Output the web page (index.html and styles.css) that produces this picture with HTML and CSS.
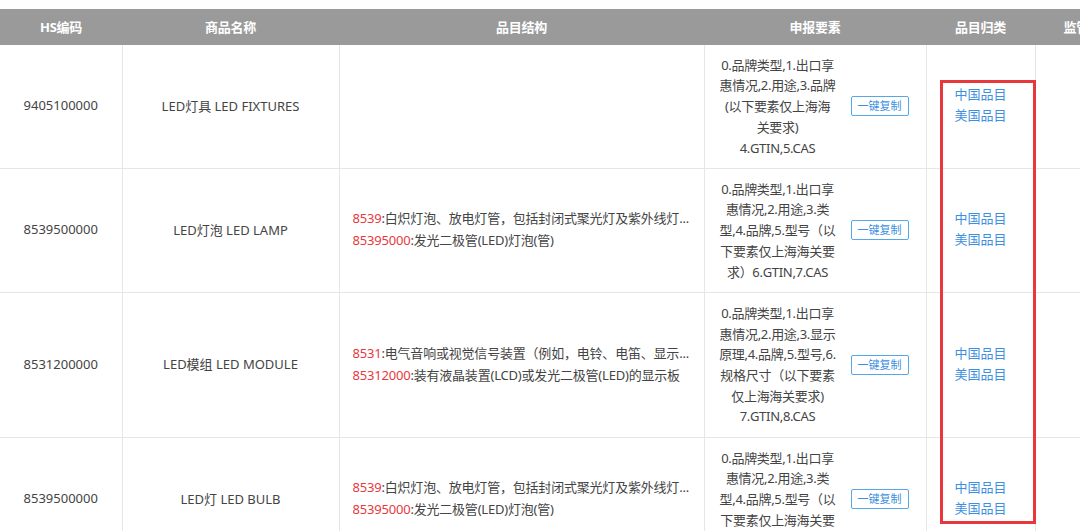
FILE: index.html
```html
<!DOCTYPE html>
<html lang="zh">
<head>
<meta charset="utf-8">
<title>HS编码</title>
<link rel="stylesheet" href="styles.css">
</head>
<body>
<div class="page">
  <table class="grid">
    <colgroup>
      <col class="c1"><col class="c2"><col class="c3"><col class="c4"><col class="c5"><col class="c6">
    </colgroup>
    <thead>
      <tr>
        <th>HS编码</th>
        <th>商品名称</th>
        <th>品目结构</th>
        <th>申报要素</th>
        <th>品目归类</th>
        <th>监管条件</th>
      </tr>
    </thead>
    <tbody>
      <tr class="r1">
        <td class="code">9405100000</td>
        <td class="name">LED灯具 LED FIXTURES</td>
        <td class="struct"></td>
        <td class="elem">
          <div class="elem-wrap">
            <div class="elem-text">0.品牌类型,1.出口享<br>惠情况,2.用途,3.品牌<br>(以下要素仅上海海<br>关要求)<br>4.GTIN,5.CAS</div>
            <span class="copy">一键复制</span>
          </div>
        </td>
        <td class="cat"><a>中国品目</a><a>美国品目</a></td>
        <td></td>
      </tr>
      <tr class="r2">
        <td class="code">8539500000</td>
        <td class="name">LED灯泡 LED LAMP</td>
        <td class="struct">
          <p><span class="num">8539</span>:白炽灯泡、放电灯管，包括封闭式聚光灯及紫外线灯...</p>
          <p><span class="num">85395000</span>:发光二极管(LED)灯泡(管)</p>
        </td>
        <td class="elem">
          <div class="elem-wrap">
            <div class="elem-text">0.品牌类型,1.出口享<br>惠情况,2.用途,3.类<br>型,4.品牌,5.型号（以<br>下要素仅上海海关要<br>求）6.GTIN,7.CAS</div>
            <span class="copy">一键复制</span>
          </div>
        </td>
        <td class="cat"><a>中国品目</a><a>美国品目</a></td>
        <td></td>
      </tr>
      <tr class="r3">
        <td class="code">8531200000</td>
        <td class="name">LED模组 LED MODULE</td>
        <td class="struct">
          <p><span class="num">8531</span>:电气音响或视觉信号装置（例如，电铃、电笛、显示...</p>
          <p><span class="num">85312000</span>:装有液晶装置(LCD)或发光二极管(LED)的显示板</p>
        </td>
        <td class="elem">
          <div class="elem-wrap">
            <div class="elem-text">0.品牌类型,1.出口享<br>惠情况,2.用途,3.显示<br>原理,4.品牌,5.型号,6.<br>规格尺寸（以下要素<br>仅上海海关要求)<br>7.GTIN,8.CAS</div>
            <span class="copy">一键复制</span>
          </div>
        </td>
        <td class="cat"><a>中国品目</a><a>美国品目</a></td>
        <td></td>
      </tr>
      <tr class="r4">
        <td class="code">8539500000</td>
        <td class="name">LED灯 LED BULB</td>
        <td class="struct">
          <p><span class="num">8539</span>:白炽灯泡、放电灯管，包括封闭式聚光灯及紫外线灯...</p>
          <p><span class="num">85395000</span>:发光二极管(LED)灯泡(管)</p>
        </td>
        <td class="elem">
          <div class="elem-wrap">
            <div class="elem-text">0.品牌类型,1.出口享<br>惠情况,2.用途,3.类<br>型,4.品牌,5.型号（以<br>下要素仅上海海关要<br>求）6.GTIN,7.CAS</div>
            <span class="copy">一键复制</span>
          </div>
        </td>
        <td class="cat"><a>中国品目</a><a>美国品目</a></td>
        <td></td>
      </tr>
    </tbody>
  </table>
  <div class="mark"></div>
</div>
</body>
</html>
```

FILE: styles.css
```css
html, body {
  margin: 0;
  padding: 0;
  background: #ffffff;
  overflow: hidden;
}

body {
  font-family: "Noto Sans", "Noto Sans CJK SC", sans-serif;
  font-size: 13px;
  color: #444444;
}

.page {
  position: relative;
  width: 1080px;
  height: 531px;
  overflow: hidden;
  padding-top: 9px;
  box-sizing: border-box;
}

.grid {
  border-collapse: collapse;
  table-layout: fixed;
  width: 1143px;
}

.c1 { width: 122px; }
.c2 { width: 217px; }
.c3 { width: 365px; }
.c4 { width: 222px; }
.c5 { width: 109px; }
.c6 { width: 108px; }

.grid th {
  background: #9a9a9a;
  color: #ffffff;
  font-weight: bold;
  font-size: 13px;
  height: 34px;
  padding: 0 0 2px 0;
  text-align: center;
  white-space: nowrap;
  overflow: hidden;
  letter-spacing: -0.3px;
}

.grid td {
  border-right: 1px solid #e6e6e6;
  border-bottom: 1px solid #e6e6e6;
  padding: 0 0 3px 0;
  vertical-align: middle;
  text-align: center;
}

.r1 td, .r2 td, .r4 td { height: 120px; }
.r3 td { height: 141px; }

.grid td.elem {
  padding: 0;
}

.r1 td.elem, .r2 td.elem, .r4 td.elem { height: 123px; }
.r3 td.elem { height: 144px; }

.grid td.struct {
  text-align: left;
  padding: 0 10px 3px 13px;
}

.struct p {
  margin: 0;
  line-height: 22px;
  white-space: nowrap;
  overflow: hidden;
  letter-spacing: -0.2px;
}

.num {
  color: #e8383d;
}

.elem-wrap {
  display: flex;
  align-items: center;
  padding: 0 10px;
  gap: 10px;
}

.elem-text {
  width: 126px;
  line-height: 20.7px;
  text-align: center;
  white-space: nowrap;
  letter-spacing: -0.3px;
}

.copy {
  display: inline-block;
  border: 1px solid #56a6e8;
  border-radius: 2px;
  color: #3d8fe0;
  font-size: 11px;
  line-height: 18px;
  padding: 0 6px;
  white-space: nowrap;
}

.cat a {
  display: block;
  color: #3d8fe0;
  line-height: 21px;
  font-size: 13px;
  cursor: pointer;
}

.mark {
  position: absolute;
  left: 940px;
  top: 80px;
  width: 90px;
  height: 438px;
  border: 3px solid #e8383d;
}
```
